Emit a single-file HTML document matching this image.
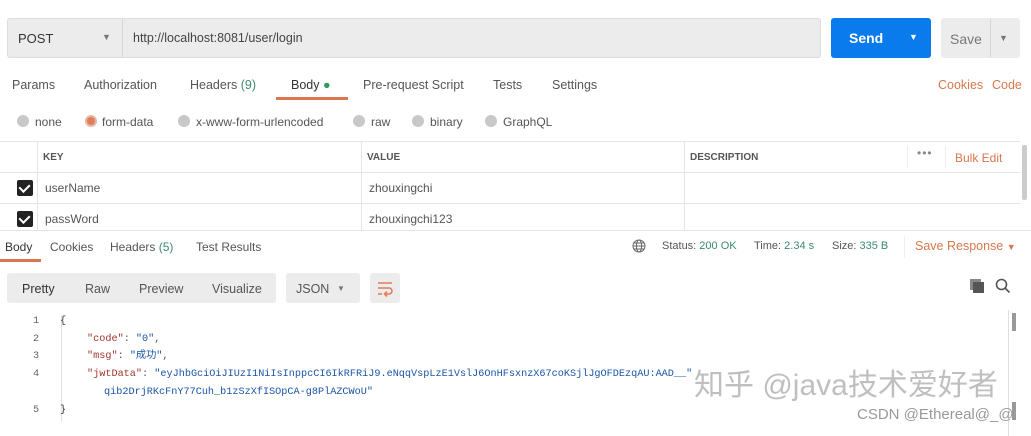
<!DOCTYPE html>
<html><head><meta charset="utf-8"><style>
*{margin:0;padding:0;box-sizing:border-box}
body{width:1031px;height:436px;background:#fff;position:relative;overflow:hidden;font-family:"Liberation Sans","Noto Sans CJK SC",sans-serif;font-size:12px;color:#555}
.a{position:absolute;white-space:nowrap}
.or{color:#d9774f}
.g{color:#3d8a6e}
.mono{font-family:"Liberation Mono","Noto Sans CJK SC",monospace;font-size:10.2px;line-height:14px;height:14px}
.k{color:#a2342a}.v{color:#1a56a8}
.rad{position:absolute;width:12px;height:12px;border-radius:50%;background:#c8c8c8}
.cb{position:absolute;width:16px;height:16px;background:#222;border-radius:2px}
.cb:after{content:"";position:absolute;left:4px;top:2px;width:5px;height:8px;border:solid #fff;border-width:0 2.5px 2.5px 0;transform:rotate(45deg)}
</style></head><body>
<div class="a" style="left:7px;top:18px;width:814px;height:40px;background:#ececec;border:1px solid #dcdcdc;border-radius:3px"></div>
<div class="a" style="left:122px;top:19px;width:1px;height:38px;background:#d6d6d6"></div>
<div class="a" style="left:18px;top:31px;font-size:13px;color:#333">POST</div>
<div class="a" style="left:102px;top:32px;font-size:9px;color:#777">▼</div>
<div class="a" style="left:133px;top:31px;font-size:12.5px;color:#444">http://localhost:8081/user/login</div>
<div class="a" style="left:831px;top:18px;width:100px;height:40px;background:#097bed;border-radius:3px"></div>
<div class="a" style="left:849px;top:30px;font-size:14px;font-weight:bold;color:#fff">Send</div>
<div class="a" style="left:909px;top:32px;font-size:9px;color:#fff">▼</div>
<div class="a" style="left:941px;top:18px;width:79px;height:40px;background:#ececec;border-radius:3px"></div>
<div class="a" style="left:990px;top:19px;width:1px;height:38px;background:#d6d6d6"></div>
<div class="a" style="left:950px;top:31px;font-size:14px;color:#777">Save</div>
<div class="a" style="left:999px;top:33px;font-size:9px;color:#777">▼</div>
<div class="a" style="left:12px;top:78px;font-size:12.5px">Params</div>
<div class="a" style="left:84px;top:78px;font-size:12.5px">Authorization</div>
<div class="a" style="left:190px;top:78px;font-size:12.5px">Headers <span class="g">(9)</span></div>
<div class="a" style="left:291px;top:78px;font-size:12.5px;color:#333">Body <span style="color:#2e9a55">●</span></div>
<div class="a" style="left:276px;top:97px;width:72px;height:3px;background:#d9774f"></div>
<div class="a" style="left:363px;top:78px;font-size:12.5px">Pre-request Script</div>
<div class="a" style="left:493px;top:78px;font-size:12.5px">Tests</div>
<div class="a" style="left:552px;top:78px;font-size:12.5px">Settings</div>
<div class="a or" style="left:938px;top:78px;font-size:12.5px">Cookies</div>
<div class="a or" style="left:992px;top:78px;font-size:12.5px">Code</div>
<div class="rad" style="left:17px;top:115px"></div><div class="a" style="left:35px;top:115px">none</div>
<div class="rad" style="left:85px;top:115px;background:#e07d5d;border:2px solid #e8b8a4"></div><div class="a" style="left:102px;top:115px">form-data</div>
<div class="rad" style="left:178px;top:115px"></div><div class="a" style="left:196px;top:115px">x-www-form-urlencoded</div>
<div class="rad" style="left:353px;top:115px"></div><div class="a" style="left:371px;top:115px">raw</div>
<div class="rad" style="left:412px;top:115px"></div><div class="a" style="left:430px;top:115px">binary</div>
<div class="rad" style="left:485px;top:115px"></div><div class="a" style="left:503px;top:115px">GraphQL</div>
<div class="a" style="left:0;top:141px;width:1020px;height:1px;background:#e4e4e4"></div>
<div class="a" style="left:0;top:172px;width:1020px;height:1px;background:#e4e4e4"></div>
<div class="a" style="left:0;top:203px;width:1020px;height:1px;background:#e4e4e4"></div>
<div class="a" style="left:37px;top:142px;width:1px;height:88px;background:#e4e4e4"></div>
<div class="a" style="left:361px;top:142px;width:1px;height:88px;background:#e4e4e4"></div>
<div class="a" style="left:684px;top:142px;width:1px;height:88px;background:#e4e4e4"></div>
<div class="a" style="left:907px;top:146px;width:1px;height:22px;background:#eee"></div>
<div class="a" style="left:945px;top:146px;width:1px;height:22px;background:#eee"></div>
<div class="a" style="left:43px;top:152px;font-size:10px;font-weight:bold;color:#555">KEY</div>
<div class="a" style="left:367px;top:152px;font-size:10px;font-weight:bold;color:#555">VALUE</div>
<div class="a" style="left:690px;top:152px;font-size:10px;font-weight:bold;color:#555">DESCRIPTION</div>
<div class="a" style="left:917px;top:146px;font-size:12px;color:#888;letter-spacing:1px">•••</div>
<div class="a or" style="left:955px;top:151px;font-size:12px">Bulk Edit</div>
<div class="cb" style="left:17px;top:180px"></div>
<div class="cb" style="left:17px;top:211px"></div>
<div class="a" style="left:45px;top:181px">userName</div>
<div class="a" style="left:369px;top:181px">zhouxingchi</div>
<div class="a" style="left:45px;top:212px">passWord</div>
<div class="a" style="left:369px;top:212px">zhouxingchi123</div>
<div class="a" style="left:1022px;top:145px;width:5px;height:55px;background:#ccc;border-radius:2px"></div>
<div class="a" style="left:0;top:230px;width:1031px;height:1px;background:#e4e4e4"></div>
<div class="a" style="left:5px;top:240px;font-size:12px;color:#333">Body</div>
<div class="a" style="left:0;top:259px;width:41px;height:3px;background:#d9774f"></div>
<div class="a" style="left:50px;top:240px;font-size:12px">Cookies</div>
<div class="a" style="left:110px;top:240px;font-size:12px">Headers <span class="g">(5)</span></div>
<div class="a" style="left:196px;top:240px;font-size:12px">Test Results</div>
<svg class="a" style="left:632px;top:239px" width="14" height="14" viewBox="0 0 14 14" fill="none" stroke="#666" stroke-width="1"><circle cx="7" cy="7" r="6"/><ellipse cx="7" cy="7" rx="2.6" ry="6"/><path d="M1 7h12M2 4h10M2 10h10"/></svg>
<div class="a" style="left:662px;top:240px;font-size:11px">Status: <span class="g">200 OK</span></div>
<div class="a" style="left:754px;top:240px;font-size:11px">Time: <span class="g">2.34 s</span></div>
<div class="a" style="left:832px;top:240px;font-size:11px">Size: <span class="g">335 B</span></div>
<div class="a" style="left:904px;top:236px;width:1px;height:22px;background:#eee"></div>
<div class="a or" style="left:915px;top:239px;font-size:12.5px">Save Response <span style="font-size:9px">▼</span></div>
<div class="a" style="left:7px;top:273px;width:269px;height:30px;background:#ececec;border-radius:3px"></div>
<div class="a" style="left:22px;top:282px;font-size:12.5px;color:#333">Pretty</div>
<div class="a" style="left:85px;top:282px;font-size:12.5px">Raw</div>
<div class="a" style="left:139px;top:282px;font-size:12.5px">Preview</div>
<div class="a" style="left:212px;top:282px;font-size:12.5px">Visualize</div>
<div class="a" style="left:286px;top:273px;width:74px;height:30px;background:#ececec;border-radius:3px"></div>
<div class="a" style="left:296px;top:282px;font-size:12.5px">JSON</div>
<div class="a" style="left:337px;top:284px;font-size:8px;color:#777">▼</div>
<div class="a" style="left:370px;top:273px;width:30px;height:30px;background:#ececec;border-radius:3px"></div>
<svg class="a" style="left:376px;top:279px" width="18" height="18" viewBox="0 0 18 18" fill="none" stroke="#e07d5d" stroke-width="1.6"><path d="M2 4h14M2 9h11a3 3 0 0 1 0 6H9M11 12.5l-2.5 2.5 2.5 2.5M2 15h4"/></svg>
<svg class="a" style="left:969px;top:278px" width="16" height="16" viewBox="0 0 16 16"><rect x="1" y="1" width="11" height="11" fill="#888"/><rect x="4" y="4" width="11" height="11" fill="#555"/></svg>
<svg class="a" style="left:995px;top:278px" width="16" height="16" viewBox="0 0 16 16" fill="none" stroke="#555" stroke-width="1.6"><circle cx="6.5" cy="6.5" r="5"/><path d="M10 10l4.5 4.5"/></svg>
<div class="a" style="left:61px;top:316px;width:1px;height:106px;background:#e0e0e0"></div>
<div class="a mono" style="left:33px;top:315px;color:#666">1</div>
<div class="a mono" style="left:33px;top:333px;color:#666">2</div>
<div class="a mono" style="left:33px;top:350px;color:#666">3</div>
<div class="a mono" style="left:33px;top:368px;color:#666">4</div>
<div class="a mono" style="left:33px;top:404px;color:#666">5</div>
<div class="a mono" style="left:60px;top:315px;color:#333">{</div>
<div class="a mono" style="left:87px;top:333px"><span class="k">"code"</span>: <span class="v">"0"</span>,</div>
<div class="a mono" style="left:87px;top:350px"><span class="k">"msg"</span>: <span class="v">"成功"</span>,</div>
<div class="a mono" style="left:87px;top:368px"><span class="k">"jwtData"</span>: <span class="v">"eyJhbGciOiJIUzI1NiIsInppcCI6IkRFRiJ9.eNqqVspLzE1VslJ6OnHFsxnzX67coKSjlJgOFDEzqAU:AAD__"</span></div>
<div class="a mono v" style="left:104px;top:386px">qib2DrjRKcFnY77Cuh_b1zSzXfISOpCA-g8PlAZCWoU"</div>
<div class="a mono" style="left:60px;top:404px;color:#333">}</div>
<div class="a" style="left:1012px;top:313px;width:4px;height:18px;background:#999"></div>
<div class="a" style="left:1012px;top:402px;width:4px;height:18px;background:#999"></div>
<div class="a" style="left:1008px;top:310px;width:1px;height:126px;background:#e0e0e0"></div>
<div class="a" style="left:694px;top:360px;font-size:30px;color:rgba(170,170,170,0.75)">知乎 @java技术爱好者</div>
<div class="a" style="left:857px;top:406px;font-size:15px;color:#999">CSDN @Ethereal@_@</div>
</body></html>
